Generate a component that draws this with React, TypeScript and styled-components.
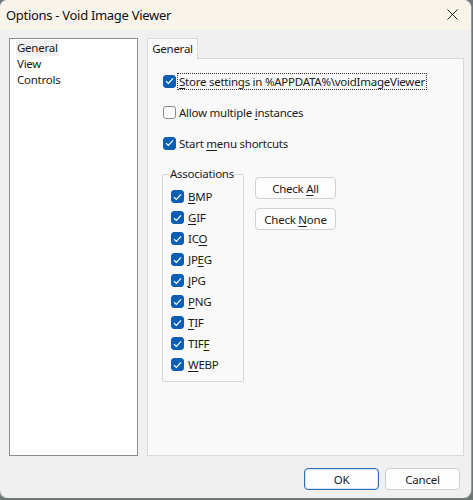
import styled, { createGlobalStyle } from 'styled-components'

const Global = createGlobalStyle`
  *, *::before, *::after {
    box-sizing: border-box;
  }
  html, body {
    margin: 0;
    padding: 0;
    background: #6f7676;
  }
  body {
    font-family: "Noto Sans", "Open Sans", sans-serif;
    font-size: 11.5px;
    letter-spacing: -0.25px;
    color: #1a1a1a;
  }
`

const Window = styled.div`
  width: 471px;
  height: 498px;
  display: flex;
  flex-direction: column;
  border-radius: 8px;
  overflow: hidden;
  box-shadow: 0 0 0 1px #9a9a9a;
  background: #f0f0f0;
`

const TitleBar = styled.div`
  height: 30px;
  flex: none;
  display: flex;
  align-items: center;
  justify-content: space-between;
  padding: 0 13px 1px 6px;
  background: #f8f4ea;
`

const Title = styled.div`
  font-size: 13px;
  color: #111;
  letter-spacing: -0.3px;
`

const Body = styled.div`
  flex: 1;
  display: flex;
  flex-direction: column;
  padding: 8px 7px 9px 9px;
`

const Main = styled.div`
  display: flex;
  gap: 9px;
`

const ListBox = styled.div`
  width: 129px;
  height: 418px;
  background: #fff;
  border: 1px solid #8c8c8c;
  padding: 1px 0 0 6px;
  display: flex;
  flex-direction: column;
  align-items: flex-start;
`

const ListItem = styled.div<{ $selected?: boolean }>`
  height: 16px;
  line-height: 16px;
  padding: 0 1px;
  background: ${p => (p.$selected ? '#f0f0f0' : 'transparent')};
`

const TabArea = styled.div`
  flex: 1;
  display: flex;
  flex-direction: column;
`

const TabStrip = styled.div`
  display: flex;
  height: 21px;
  margin-bottom: -1px;
  position: relative;
  z-index: 1;
`

const Tab = styled.div`
  width: 51px;
  height: 21px;
  border: 1px solid #d9d9d9;
  border-bottom: none;
  background: #f9f9f9;
  text-align: center;
  line-height: 19px;
`

const Panel = styled.div`
  height: 398px;
  background: #f9f9f9;
  border: 1px solid #d9d9d9;
  padding: 14px 0 0 15px;
  display: flex;
  flex-direction: column;
`

const CheckRow = styled.label<{ $gap?: number }>`
  display: flex;
  align-items: center;
  height: 16px;
  margin-bottom: ${p => p.$gap ?? 0}px;
  gap: 2px;
`

const Box = styled.span<{ $checked?: boolean }>`
  width: 13px;
  height: 13px;
  border-radius: 3px;
  flex: none;
  display: flex;
  align-items: center;
  justify-content: center;
  background: ${p => (p.$checked ? '#0a5fb4' : '#fdfdfd')};
  border: 1px solid ${p => (p.$checked ? '#0a5fb4' : '#8a8a8a')};
`

const Label = styled.span<{ $focus?: boolean }>`
  padding: 0 1px;
  line-height: 15px;
  outline: ${p => (p.$focus ? '1px dotted #333' : 'none')};
  white-space: nowrap;
`

const U = styled.span`
  text-decoration: underline;
  text-underline-offset: 2px;
`

const Lower = styled.div`
  display: flex;
  gap: 11px;
  margin: 16px 0 0 -1px;
`

const Group = styled.fieldset`
  margin: 0;
  width: 82px;
  height: 215px;
  border: 1px solid #d5d5d5;
  border-radius: 2px;
  padding: 5px 0 0 8px;
  display: flex;
  flex-direction: column;
`

const Legend = styled.legend`
  padding: 0 1px;
  margin-left: -2px;
  line-height: 14px;
`

const GroupRow = styled(CheckRow)`
  height: 21px;
  gap: 3px;
`

const SideButtons = styled.div`
  display: flex;
  flex-direction: column;
  gap: 9px;
  padding-top: 10px;
`

const Button = styled.button`
  width: 81px;
  height: 22px;
  border-radius: 4px;
  font-family: inherit;
  font-size: 11.5px;
  letter-spacing: -0.25px;
  color: #1a1a1a;
  background: #fdfdfd;
  border: 1px solid #d0d0d0;
  padding: 0;
`

const Footer = styled.div`
  flex: none;
  display: flex;
  justify-content: flex-end;
  gap: 6px;
  padding: 12px 4px 0 0;
`

const FooterButton = styled(Button)<{ $default?: boolean }>`
  width: 75px;
  border-color: ${p => (p.$default ? '#2f6fb0' : '#d0d0d0')};
  box-shadow: ${p => (p.$default ? 'inset 0 0 0 1px #d6e5f4' : 'none')};
`

function Check() {
  return (
    <svg width="9" height="8" viewBox="0 0 9 8">
      <path d="M1 4.2 L3.4 6.4 L8 1.4" fill="none" stroke="#fff" strokeWidth="1.2" />
    </svg>
  )
}

function Checkbox({ checked, children, focus, gap }: { checked?: boolean; children: React.ReactNode; focus?: boolean; gap?: number }) {
  return (
    <CheckRow $gap={gap}>
      <Box $checked={checked}>{checked && <Check />}</Box>
      <Label $focus={focus}>{children}</Label>
    </CheckRow>
  )
}

const formats: [string, number][] = [
  ['BMP', 0],
  ['GIF', 0],
  ['ICO', 2],
  ['JPEG', 2],
  ['JPG', 0],
  ['PNG', 0],
  ['TIF', 0],
  ['TIFF', 3],
  ['WEBP', 0],
]

function Mnemonic({ text, at }: { text: string; at: number }) {
  return (
    <>
      {text.slice(0, at)}
      <U>{text[at]}</U>
      {text.slice(at + 1)}
    </>
  )
}

export default function App() {
  return (
    <>
      <Global />
      <Window>
        <TitleBar>
          <Title>Options - Void Image Viewer</Title>
          <svg width="11" height="11" viewBox="0 0 11 11">
            <path d="M0.5 0.5 L10.5 10.5 M10.5 0.5 L0.5 10.5" stroke="#222" strokeWidth="1" />
          </svg>
        </TitleBar>
        <Body>
          <Main>
            <ListBox>
              <ListItem $selected>General</ListItem>
              <ListItem>View</ListItem>
              <ListItem>Controls</ListItem>
            </ListBox>
            <TabArea>
              <TabStrip>
                <Tab>General</Tab>
              </TabStrip>
              <Panel>
                <Checkbox checked focus gap={15}>
                  <Mnemonic text="Store settings in %APPDATA%\voidImageViewer" at={0} />
                </Checkbox>
                <Checkbox gap={15}>
                  <Mnemonic text="Allow multiple instances" at={15} />
                </Checkbox>
                <Checkbox checked>
                  <Mnemonic text="Start menu shortcuts" at={6} />
                </Checkbox>
                <Lower>
                  <Group>
                    <Legend>Associations</Legend>
                    {formats.map(([f, at]) => (
                      <GroupRow key={f}>
                        <Box $checked>
                          <Check />
                        </Box>
                        <Label>
                          <Mnemonic text={f} at={at} />
                        </Label>
                      </GroupRow>
                    ))}
                  </Group>
                  <SideButtons>
                    <Button>
                      Check <U>A</U>ll
                    </Button>
                    <Button>
                      Check <U>N</U>one
                    </Button>
                  </SideButtons>
                </Lower>
              </Panel>
            </TabArea>
          </Main>
          <Footer>
            <FooterButton $default>OK</FooterButton>
            <FooterButton>Cancel</FooterButton>
          </Footer>
        </Body>
      </Window>
    </>
  )
}
